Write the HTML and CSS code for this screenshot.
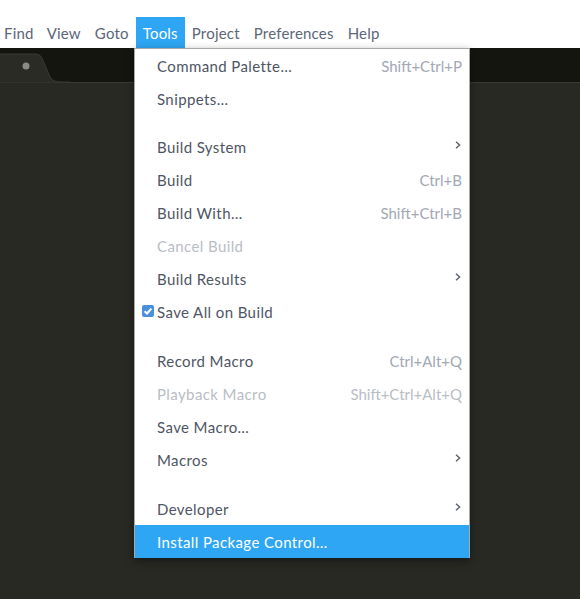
FILE: index.html
```html
<!DOCTYPE html>
<html>
<head>
<meta charset="utf-8">
<link rel="stylesheet" href="styles.css">
</head>
<body>
<div class="app">
  <nav class="menubar">
    <span class="mb-item">Find</span>
    <span class="mb-item">View</span>
    <span class="mb-item">Goto</span>
    <span class="mb-item active">Tools</span>
    <span class="mb-item">Project</span>
    <span class="mb-item">Preferences</span>
    <span class="mb-item">Help</span>
  </nav>
  <div class="editor">
    <div class="tabbar">
      <svg class="tab" width="70" height="35" viewBox="0 0 70 35">
        <path d="M-2 35 V8 Q-2 6 2 6 H36 Q40 6 42 10 L50 29 Q53 34 60 34 H70 V35 Z" fill="#2b2b26" stroke="#3a3a34" stroke-width="1"/>
        <circle cx="26" cy="18" r="3.5" fill="#8a8a86"/>
      </svg>
    </div>
    <div class="content"></div>
  </div>

  <div class="menu">
    <div class="mi"><span class="lbl">Command Palette…</span><span class="sc">Shift+Ctrl+P</span></div>
    <div class="mi"><span class="lbl">Snippets…</span></div>
    <div class="sep first"></div>
    <div class="mi"><span class="lbl">Build System</span><svg class="arrow" width="6" height="8" viewBox="0 0 6 8"><path d="M1 0.8 L4.6 4 L1 7.2" fill="none" stroke="#5a606c" stroke-width="1.4"/></svg></div>
    <div class="mi"><span class="lbl">Build</span><span class="sc">Ctrl+B</span></div>
    <div class="mi"><span class="lbl">Build With…</span><span class="sc">Shift+Ctrl+B</span></div>
    <div class="mi disabled"><span class="lbl">Cancel Build</span></div>
    <div class="mi"><span class="lbl">Build Results</span><svg class="arrow" width="6" height="8" viewBox="0 0 6 8"><path d="M1 0.8 L4.6 4 L1 7.2" fill="none" stroke="#5a606c" stroke-width="1.4"/></svg></div>
    <div class="mi"><span class="check"><svg width="12" height="12" viewBox="0 0 12 12"><rect x="0" y="0" width="12" height="12" rx="2" fill="#4a90d9"/><path d="M2.6 6.2 L5 8.5 L9.4 3.6" fill="none" stroke="#fff" stroke-width="2"/></svg></span><span class="lbl">Save All on Build</span></div>
    <div class="sep"></div>
    <div class="mi"><span class="lbl">Record Macro</span><span class="sc">Ctrl+Alt+Q</span></div>
    <div class="mi disabled"><span class="lbl">Playback Macro</span><span class="sc">Shift+Ctrl+Alt+Q</span></div>
    <div class="mi"><span class="lbl">Save Macro…</span></div>
    <div class="mi"><span class="lbl">Macros</span><svg class="arrow" width="6" height="8" viewBox="0 0 6 8"><path d="M1 0.8 L4.6 4 L1 7.2" fill="none" stroke="#5a606c" stroke-width="1.4"/></svg></div>
    <div class="sep"></div>
    <div class="mi"><span class="lbl">Developer</span><svg class="arrow" width="6" height="8" viewBox="0 0 6 8"><path d="M1 0.8 L4.6 4 L1 7.2" fill="none" stroke="#5a606c" stroke-width="1.4"/></svg></div>
    <div class="mi hl"><span class="lbl">Install Package Control…</span></div>
  </div>
</div>
</body>
</html>
```

FILE: styles.css
```css
html, body {
  margin: 0;
  padding: 0;
  background: #ffffff;
  font-family: Lato, "Open Sans", sans-serif;
  font-size: 15px;
  letter-spacing: 0.4px;
}
.app {
  position: relative;
  width: 580px;
  height: 599px;
  display: flex;
  flex-direction: column;
  overflow: hidden;
}
.menubar {
  height: 31px;
  padding-top: 17px;
  display: flex;
  background: #ffffff;
  letter-spacing: 0.2px;
}
.mb-item {
  display: flex;
  align-items: center;
  padding: 0 7px;
  color: #5c6679;
  height: 31px;
}
.mb-item:first-child {
  padding-left: 4px;
  padding-right: 6px;
}
.mb-item.active {
  background: #2ea6f3;
  color: #ffffff;
}
.editor {
  flex: 1;
  display: flex;
  flex-direction: column;
  background: #282823;
}
.tabbar {
  height: 34px;
  background: #15150f;
  border-bottom: 1px solid #3a3a34;
}
.tab {
  display: block;
}
.content {
  flex: 1;
  background: #292924;
}
.menu {
  position: absolute;
  left: 134px;
  top: 48px;
  width: 334px;
  background: #ffffff;
  border: 1px solid #a9a9a9;
  border-bottom: none;
  box-shadow: 0 3px 8px rgba(0, 0, 0, 0.45);
}
.mi {
  height: 33px;
  display: flex;
  align-items: center;
  padding: 0 7px 0 22px;
  color: #4e5564;
  position: relative;
}
.lbl {
  flex: 1;
}
.sc {
  color: #a2a8b4;
  letter-spacing: 0;
}
.disabled .lbl,
.disabled .sc {
  color: #b9bdc4;
}
.arrow {
  display: block;
  margin-right: 1px;
  margin-top: -4px;
}
.check {
  position: absolute;
  left: 7px;
  top: 10px;
  width: 12px;
  height: 12px;
  display: block;
}
.check svg {
  display: block;
}
.sep {
  height: 16px;
}
.sep.first {
  height: 15px;
}
.hl {
  background: #2ea6f3;
  color: #ffffff;
}
```
